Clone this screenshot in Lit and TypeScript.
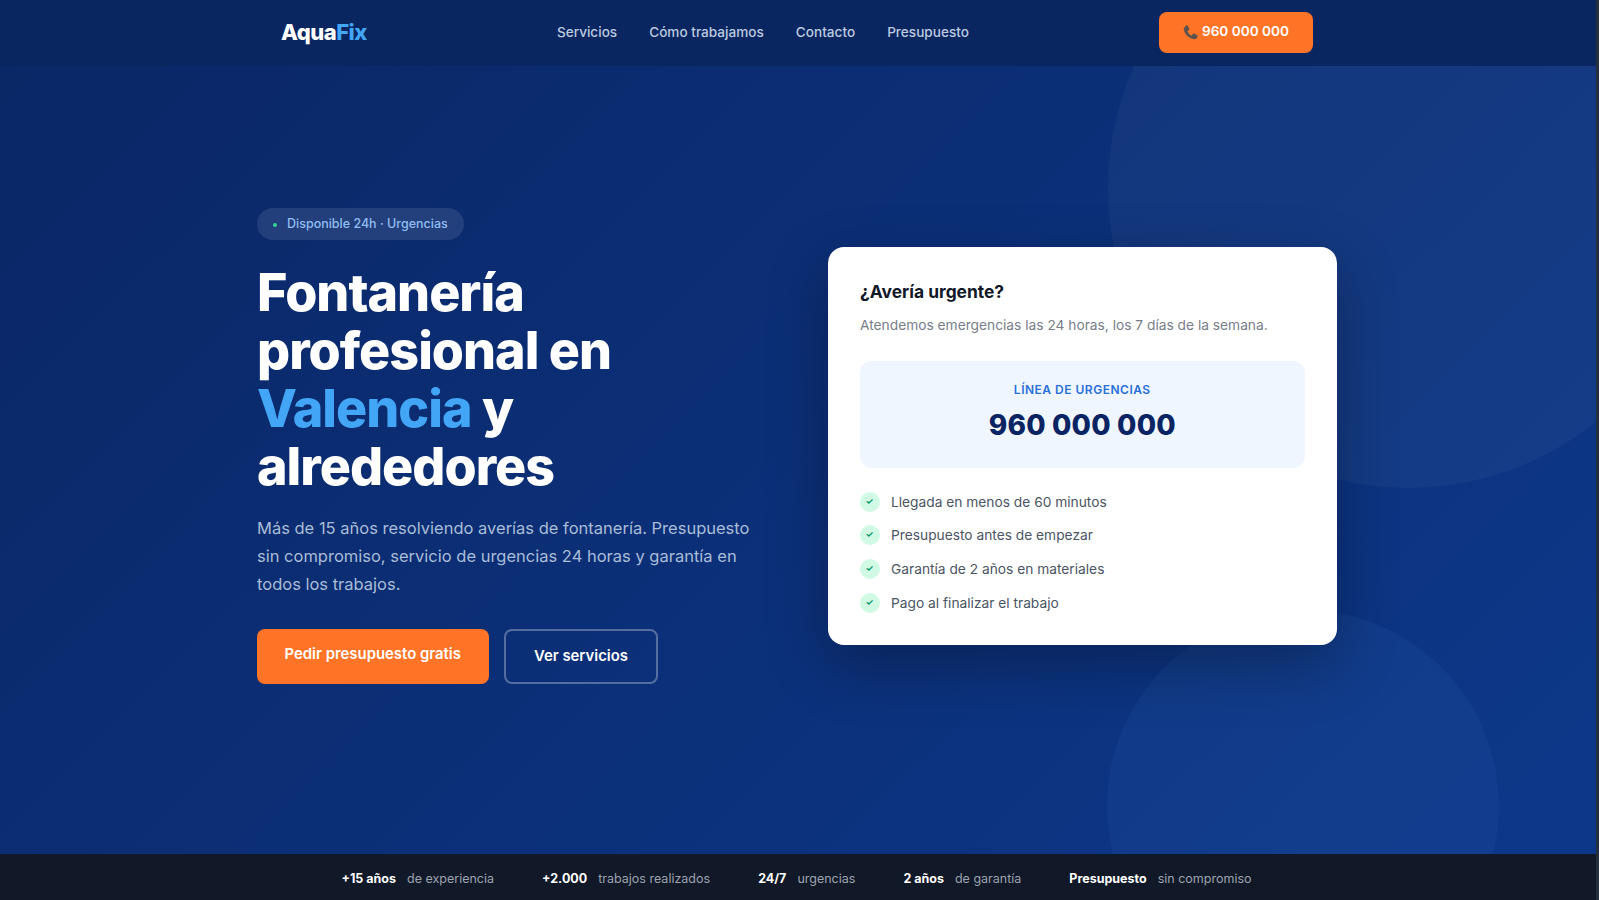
import { LitElement, html, css } from "lit";
import { customElement } from "lit/decorators.js";

const CHECKS = [
  "Llegada en menos de 60 minutos",
  "Presupuesto antes de empezar",
  "Garantía de 2 años en materiales",
  "Pago al finalizar el trabajo",
];
const LINKS = ["Servicios", "Cómo trabajamos", "Contacto", "Presupuesto"];
const STATS: [string, string][] = [
  ["+15 años", "de experiencia"],
  ["+2.000", "trabajos realizados"],
  ["24/7", "urgencias"],
  ["2 años", "de garantía"],
  ["Presupuesto", "sin compromiso"],
];

@customElement("app-root")
export class AppRoot extends LitElement {
  static styles = css`
    :host {
      display: flex;
      flex-direction: column;
      height: 900px;
      overflow: hidden;
      padding-right: 3px;
      box-sizing: border-box;
      background: #25303f;
      font-family: Inter, "Liberation Sans", sans-serif;
      line-height: 1.6;
    }
    a { text-decoration: none; }
    .nav {
      height: 66px;
      flex: none;
      background: #0a2661;
      padding-right: 2px;
      display: flex;
      justify-content: center;
      position: relative;
      z-index: 2;
    }
    .nav-inner {
      width: 1080px;
      box-sizing: border-box;
      padding: 0 24px;
      display: flex;
      align-items: center;
      justify-content: space-between;
    }
    .logo {
      font-size: 22px;
      font-weight: 800;
      letter-spacing: -0.5px;
      color: #fff;
    }
    .logo span, .accent { color: #42a5f5; }
    .links { display: flex; gap: 32px; }
    .links a {
      font-size: 13.6px;
      font-weight: 500;
      color: #bccbe0;
    }
    .call {
      display: flex;
      align-items: center;
      gap: 4px;
      height: 41px;
      margin-bottom: 2px;
      padding: 0 24px;
      box-sizing: border-box;
      border-radius: 8px;
      background: #ff7427;
      color: #fff;
      font-size: 13.6px;
      font-weight: 600;
    }
    .call svg { width: 15px; height: 15px; display: block; }
    .hero {
      flex: 1;
      position: relative;
      overflow: hidden;
      background: linear-gradient(135deg, #0a2766 0%, #0d388a 100%);
      padding: 142px 2px 170px 0;
      display: flex;
      justify-content: center;
      align-items: center;
    }
    .circle {
      position: absolute;
      border-radius: 50%;
    }
    .c1 {
      width: 600px;
      height: 600px;
      left: 1108px;
      top: -178px;
      background: rgba(255, 255, 255, 0.035);
    }
    .c2 {
      width: 392px;
      height: 392px;
      left: 1107px;
      top: 544px;
      background: rgba(66, 120, 200, 0.11);
    }
    .grid {
      position: relative;
      width: 1080px;
      display: grid;
      grid-template-columns: 509px 508.5px;
      gap: 62px;
      align-items: center;
    }
    .pill {
      display: inline-flex;
      align-items: center;
      gap: 10px;
      height: 32px;
      padding: 0 16px;
      border-radius: 20px;
      background: rgba(255, 255, 255, 0.1);
      color: #90bdf0;
      font-size: 12.5px;
      font-weight: 500;
      vertical-align: top;
    }
    .dot {
      width: 4px;
      height: 4px;
      border-radius: 50%;
      background: #34d399;
      margin-top: 2px;
    }
    h1 {
      margin: 24px 0 18px;
      font-size: 52px;
      line-height: 58px;
      font-weight: 800;
      letter-spacing: -1px;
      color: #fff;
    }
    .lead {
      margin: 0 0 31px;
      font-size: 16.5px;
      line-height: 1.7;
      color: #a9bcd8;
    }
    .cta { display: flex; gap: 15px; line-height: 19px; }
    .btn {
      font-size: 14.9px;
      font-weight: 600;
      border-radius: 8px;
    }
    .primary {
      padding: 16px 28px 16px 27.5px;
      background: #ff7427;
      color: #fff;
    }
    .secondary {
      padding: 16px 28px;
      border: 2px solid rgba(255, 255, 255, 0.3);
      color: #fff;
    }
    .card {
      background: #fff;
      border-radius: 16px;
      padding: 32px 32px 31px;
      box-shadow: 0 20px 60px rgba(0, 0, 0, 0.3);
    }
    .card h2 {
      margin: 0 0 9px;
      font-size: 17.4px;
      line-height: 26px;
      font-weight: 700;
      color: #111827;
    }
    .card p {
      margin: 0 0 25px;
      font-size: 13.75px;
      color: #777e8a;
    }
    .phone {
      background: #eff6ff;
      border-radius: 12px;
      padding: 20px;
      text-align: center;
    }
    .phone .label {
      font-size: 12px;
      line-height: 17.2px;
      margin-bottom: 3.5px;
      font-weight: 600;
      letter-spacing: 0.5px;
      text-transform: uppercase;
      color: #2a6fdb;
    }
    .phone .num {
      font-size: 28px;
      line-height: 46.3px;
      font-weight: 800;
      letter-spacing: 0.2px;
      color: #0a2463;
    }
    ul {
      list-style: none;
      margin: 23px 0 0;
      padding: 0;
      display: grid;
      gap: 11.6px;
    }
    li {
      display: flex;
      align-items: center;
      gap: 11px;
      font-size: 13.75px;
      color: #4b5563;
    }
    .tick {
      width: 20px;
      height: 20px;
      flex: none;
      border-radius: 50%;
      background: #d1fae5;
      color: #059669;
      font-size: 9px;
      font-weight: 700;
      line-height: 18px;
      text-align: center;
      text-indent: -1px;
    }
    .bar {
      height: 46.5px;
      flex: none;
      box-sizing: border-box;
      background: #111827;
      padding: 4px 3px 0 0;
      display: flex;
      align-items: center;
      justify-content: center;
      gap: 48px;
      font-size: 12.5px;
    }
    .stat { display: flex; gap: 11px; color: #9ca3af; }
    .stat strong { color: #fff; font-weight: 700; }
  `;

  render() {
    return html`
      <nav class="nav">
        <div class="nav-inner">
          <a class="logo">Aqua<span>Fix</span></a>
          <div class="links">${LINKS.map((l) => html`<a>${l}</a>`)}</div>
          <a class="call">
            <svg viewBox="3 2 18.5 19.5" aria-hidden="true">
              <path fill="#5a5350" d="M6.6 2.6c.7-.5 1.6-.3 2 .4l2 3.6c.4.7.2 1.5-.4 2l-1.5 1.1c-.3.2-.4.6-.2 1 1 2 2.700 3.800 4.800 4.800.4.2.8.1 1-.2l1.100-1.500c.5-.6 1.300-.8 2-.4l3.600 2c.7.4.9 1.300.4 2l-1.300 1.900c-.6.9-1.700 1.400-2.800 1.200C9.800 19.200 4.800 14.200 3.500 7.700c-.2-1.100.3-2.200 1.200-2.800z"/>
            </svg>
            960 000 000
          </a>
        </div>
      </nav>
      <section class="hero">
        <div class="circle c1"></div>
        <div class="circle c2"></div>
        <div class="grid">
          <div>
            <span class="pill"><span class="dot"></span>Disponible 24h · Urgencias</span>
            <h1>Fontanería profesional en <span class="accent">Valencia</span> y alrededores</h1>
            <p class="lead">Más de 15 años resolviendo averías de fontanería. Presupuesto sin compromiso, servicio de urgencias 24 horas y garantía en todos los trabajos.</p>
            <div class="cta">
              <a class="btn primary">Pedir presupuesto gratis</a>
              <a class="btn secondary">Ver servicios</a>
            </div>
          </div>
          <div class="card">
            <h2>¿Avería urgente?</h2>
            <p>Atendemos emergencias las 24 horas, los 7 días de la semana.</p>
            <div class="phone">
              <div class="label">Línea de urgencias</div>
              <div class="num">960 000 000</div>
            </div>
            <ul>
              ${CHECKS.map((c) => html`<li><span class="tick">✓</span>${c}</li>`)}
            </ul>
          </div>
        </div>
      </section>
      <footer class="bar">
        ${STATS.map(([a, b]) => html`<div class="stat"><strong>${a}</strong><span>${b}</span></div>`)}
      </footer>
    `;
  }
}
